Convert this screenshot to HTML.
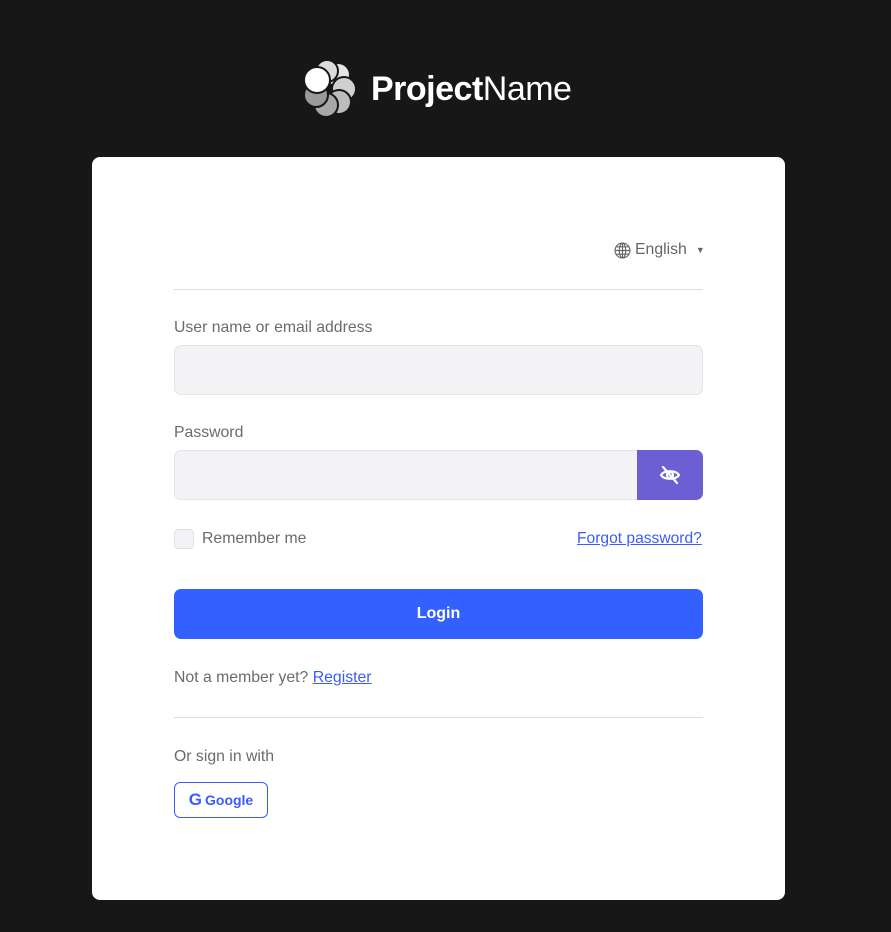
<!DOCTYPE html>
<html><head><meta charset="utf-8"><style>
*{box-sizing:border-box;margin:0;padding:0}
body{width:891px;height:932px;background:#171717;font-family:"Liberation Sans",sans-serif;position:relative;overflow:hidden}
.abs{position:absolute}
.card{left:92px;top:157px;width:693px;height:743px;background:#fff;border-radius:8px}
.lbl{color:#6b6b6b;font-size:15.8px}
.input{background:#f3f3f5;border:1px solid #e4e4e8;border-radius:7px}
a{color:#3b5bfb;text-decoration:underline}
</style></head><body>
<svg class="abs" style="left:302px;top:60px" width="58" height="58" viewBox="0 0 58 58">
<circle cx="36" cy="15" r="12" fill="#e6e6e6" stroke="#171717" stroke-width="2"/>
<circle cx="42" cy="29" r="12" fill="#d0d0d0" stroke="#171717" stroke-width="2"/>
<circle cx="37" cy="42" r="12" fill="#bcbcbc" stroke="#171717" stroke-width="2"/>
<circle cx="24" cy="45" r="12" fill="#a8a8a8" stroke="#171717" stroke-width="2"/>
<circle cx="14" cy="35" r="12" fill="#9a9a9a" stroke="#171717" stroke-width="2"/>
<circle cx="25" cy="11" r="11" fill="#dcdcdc" stroke="#171717" stroke-width="2"/>
<circle cx="15" cy="20" r="13" fill="#fff" stroke="#171717" stroke-width="2"/>
</svg>
<div class="abs" style="left:371px;top:70px;color:#fff;font-size:34px;letter-spacing:-0.5px"><b>Project</b>Name</div>
<div class="abs card"></div>
<div class="abs" style="left:614px;top:241px;color:#666;font-size:15.8px;display:flex;align-items:center;gap:4px">
<svg width="17" height="17" viewBox="0 0 16 16" fill="none" stroke="#666" stroke-width="1.1"><circle cx="8" cy="8" r="7"/><ellipse cx="8" cy="8" rx="3" ry="7"/><path d="M1 8h14M2 4.5h12M2 11.5h12M8 1v14"/></svg>
<span>English</span><span style="font-size:9px;margin-left:5px">▼</span></div>
<div class="abs" style="left:174px;top:289px;width:529px;height:1px;background:#ddd"></div>
<div class="abs lbl" style="left:174px;top:319px">User name or email address</div>
<div class="abs input" style="left:174px;top:345px;width:529px;height:50px"></div>
<div class="abs lbl" style="left:174px;top:424px">Password</div>
<div class="abs input" style="left:174px;top:450px;width:470px;height:50px;border-radius:7px 0 0 7px"></div>
<div class="abs" style="left:637px;top:450px;width:66px;height:50px;background:#6c5fd3;border-radius:0 7px 7px 0"></div>
<svg class="abs" style="left:659px;top:464px" width="22" height="22" viewBox="0 0 22 22" fill="none" stroke="#fff" stroke-width="2.2" stroke-linecap="round"><path d="M2 11c3-5 15-5 18 0c-3 5-15 5-18 0z"/><circle cx="11" cy="11" r="3"/><path d="M4 3l14 16"/></svg>
<div class="abs" style="left:174px;top:529px;width:20px;height:20px;border:1px solid #e0e0e4;background:#f3f3f5;border-radius:4px"></div>
<div class="abs lbl" style="left:202px;top:530px">Remember me</div>
<a class="abs" style="left:577px;top:530px;font-size:15.6px">Forgot password?</a>
<div class="abs" style="left:174px;top:589px;width:529px;height:50px;background:#3460ff;border-radius:7px;color:#fff;font-weight:bold;font-size:16px;text-align:center;line-height:50px">Login</div>
<div class="abs lbl" style="left:174px;top:669px">Not a member yet? <a>Register</a></div>
<div class="abs" style="left:174px;top:717px;width:529px;height:1px;background:#ddd"></div>
<div class="abs lbl" style="left:174px;top:748px">Or sign in with</div>
<div class="abs" style="left:174px;top:782px;width:94px;height:36px;border:1px solid #3b5bfb;border-radius:6px;color:#3b5bfb;font-size:14px;font-weight:bold;display:flex;align-items:center;justify-content:center;gap:3px"><span style="font-size:17px">G</span>Google</div>
</body></html>
